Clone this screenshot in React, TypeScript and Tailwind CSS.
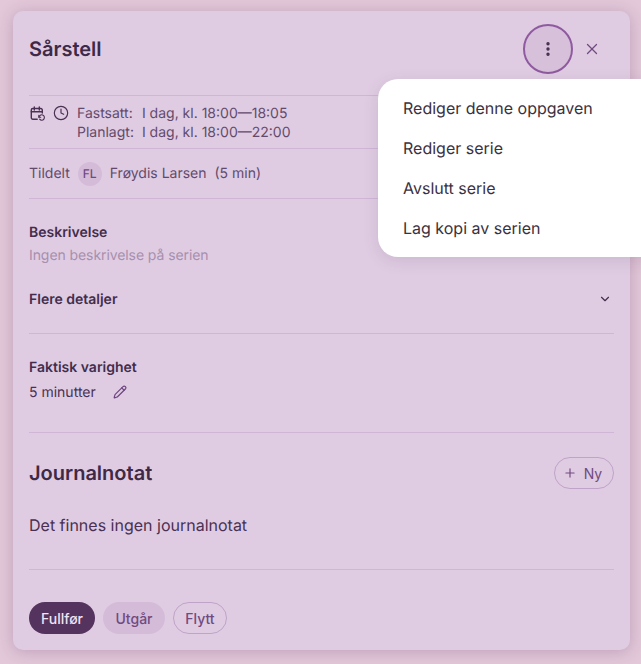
import { ChevronDown, Clock, EllipsisVertical, Pencil, Plus, X } from "lucide-react";

const menuItems = ["Rediger denne oppgaven", "Rediger serie", "Avslutt serie", "Lag kopi av serien"];

function CalendarRepeat() {
  return (
    <svg width="16" height="16" viewBox="0 0 16 16" fill="none" stroke="currentColor" strokeWidth="1.4" strokeLinecap="round" strokeLinejoin="round">
      <path d="M7.2 14.2H2.8A1.5 1.5 0 0 1 1.3 12.7V5A1.5 1.5 0 0 1 2.8 3.5h8A1.5 1.5 0 0 1 12.3 5v3" />
      <path d="M4.3 2v3M9.3 2v3M1.3 6.7h11" />
      <path d="M9.6 14.2a2.7 2.7 0 1 0-.6-2" strokeWidth="1.1" />
      <path d="M8.8 10.4v1.9h1.9" strokeWidth="1.1" />
    </svg>
  );
}

export default function App() {
  return (
    <div className="relative h-[664px] w-[641px] overflow-hidden bg-[#e2c8d9] pt-[11px] pl-[13px] font-['Inter',sans-serif] text-[#432c4c] [text-rendering:geometricPrecision] antialiased">
      <div className="h-[639px] w-[617px] rounded-[10px] bg-[#dfcce2] px-4 shadow-[0_2px_16px_rgba(90,40,90,0.25)]">
        <div className="flex h-[84px] items-start justify-between pt-[13px]">
          <h1 className="flex h-[50px] items-center text-[20px] font-semibold text-[#3f2947]">Sårstell</h1>
          <div className="mr-2 flex items-center gap-[5px]">
            <button className="flex h-[50px] w-[50px] items-center justify-center rounded-full border-2 border-[#8f5a9f] bg-[#d6c0da]">
              <EllipsisVertical size={18} strokeWidth={2.5} />
            </button>
            <button className="flex h-7 w-7 items-center justify-center text-[#704a80]">
              <X size={18} strokeWidth={1.75} />
            </button>
          </div>
        </div>

        <div className="flex h-[54px] gap-2 border-y border-[#cfb6d6] pt-[8px] text-[14px] leading-[19px] text-[#634a6c]">
          <div className="flex gap-[7px] pt-px pl-px text-[#4a3052]">
            <CalendarRepeat />
            <Clock size={16} strokeWidth={1.75} />
          </div>
          <div className="grid h-fit grid-cols-[auto_auto] justify-start gap-x-2">
            <span>Fastsatt:</span>
            <span>I dag, kl. 18:00—18:05</span>
            <span>Planlagt:</span>
            <span>I dag, kl. 18:00—22:00</span>
          </div>
        </div>

        <div className="flex h-[50px] items-center border-b border-[#cfb6d6] text-[14px] text-[#634a6c]">
          <span>Tildelt</span>
          <span className="mr-2 ml-2 flex h-6 w-6 items-center justify-center rounded-full bg-[#d4bcd9] text-[12px] font-medium text-[#704a80]">
            FL
          </span>
          <span>Frøydis Larsen</span>
          <span className="ml-2">(5 min)</span>
        </div>

        <div className="pt-6">
          <h2 className="text-[14px] leading-5 font-semibold">Beskrivelse</h2>
          <p className="mt-[3px] text-[14px] leading-5 tracking-[-0.08px] text-[#a78fae]">Ingen beskrivelse på serien</p>
        </div>

        <div className="mt-[23px] flex h-5 items-center justify-between pr-0.5">
          <h2 className="text-[14px] font-semibold">Flere detaljer</h2>
          <ChevronDown size={14} strokeWidth={2} />
        </div>

        <div className="mt-6 border-t border-[#cfb6d6] pt-6">
          <h2 className="text-[14px] leading-5 font-semibold">Faktisk varighet</h2>
          <div className="mt-[4px] flex h-5 items-center text-[14px] text-[#4a3052]">
            <span>5 minutter</span>
            <Pencil className="ml-[17px] text-[#6d4480]" size={14} strokeWidth={2} />
          </div>
        </div>

        <div className="mt-[30px] flex h-[81px] items-center justify-between border-t border-[#cfb6d6]">
          <h2 className="text-[20px] font-semibold text-[#3f2947]">Journalnotat</h2>
          <button className="flex h-8 w-[60px] items-center justify-center gap-[7px] rounded-full border border-[#bfa3c8] pr-[3px] text-[14px] text-[#704a80]">
            <Plus size={14} strokeWidth={2} />
            Ny
          </button>
        </div>

        <p className="text-[16px] leading-6 text-[#4a3052]">Det finnes ingen journalnotat</p>

        <div className="mt-8 flex gap-2 border-t border-[#cfb6d6] pt-8">
          <button className="h-8 w-[66px] rounded-full bg-[#55335f] text-[14px] font-medium text-[#f0e4f2]">Fullfør</button>
          <button className="h-8 w-[62px] rounded-full bg-[#d4bcd9] text-[14px] font-medium text-[#704a80]">Utgår</button>
          <button className="h-8 w-[54px] rounded-full border border-[#bfa3c8] text-[14px] font-medium text-[#704a80]">Flytt</button>
        </div>
      </div>

      <div className="absolute top-[79px] left-[378px] w-[300px] rounded-[20px] bg-white py-[9px] shadow-[0_4px_16px_rgba(70,30,80,0.12)]">
        {menuItems.map((item) => (
          <div key={item} className="flex h-10 items-center px-[25px] text-[16px] text-[#3b3140]">
            {item}
          </div>
        ))}
      </div>
    </div>
  );
}
